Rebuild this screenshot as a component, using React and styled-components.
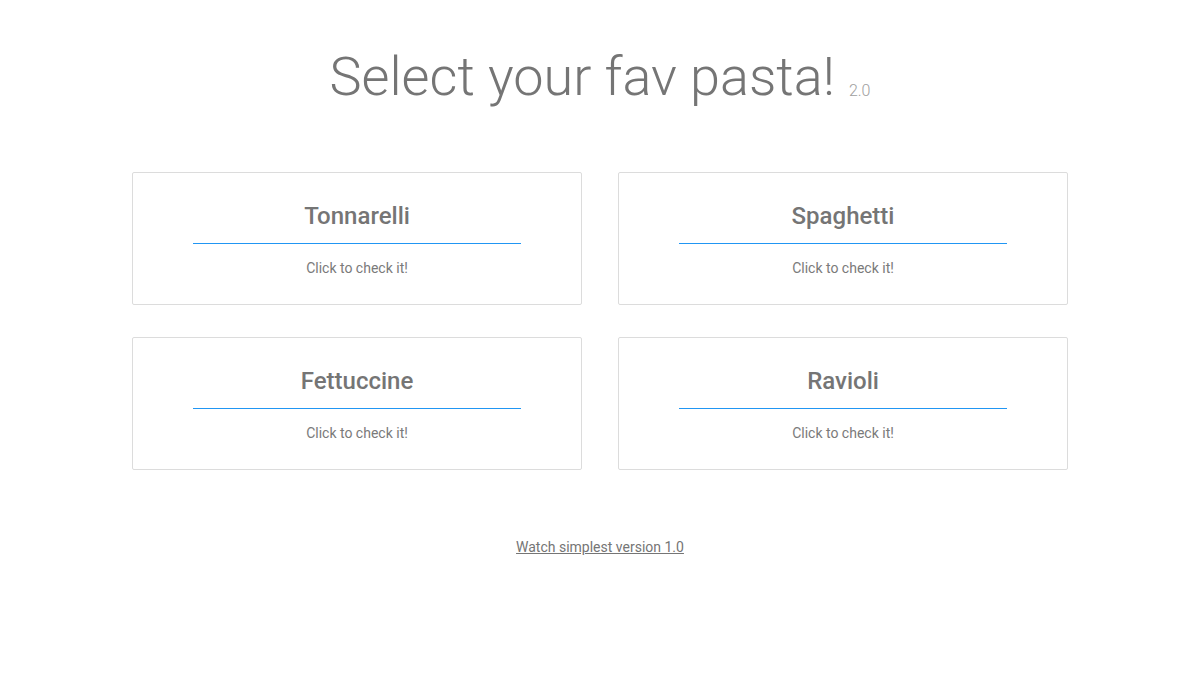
import React from 'react';
import styled, { createGlobalStyle } from 'styled-components';

const pastas = ['Tonnarelli', 'Spaghetti', 'Fettuccine', 'Ravioli'];

function App() {
    return (
        <Page>
            <GlobalStyle />
            <Title>
                Select your fav pasta!
                <Version>2.0</Version>
            </Title>
            <Grid>
                {pastas.map((name) => (
                    <Card key={name}>
                        <CardTitle>{name}</CardTitle>
                        <CardText>Click to check it!</CardText>
                    </Card>
                ))}
            </Grid>
            <Footer>
                <OldLink href="#">Watch simplest version 1.0</OldLink>
            </Footer>
        </Page>
    );
}

const GlobalStyle = createGlobalStyle`
    html, body {
        margin: 0;
        padding: 0;
        background: #fff;
        font-family: Roboto, "Liberation Sans", sans-serif;
        color: #757575;
    }
`;
const Page = styled.div`
    width: 936px;
    margin: 0 auto;
    padding-top: 40px;
`;
const Title = styled.h1`
    margin: 0;
    text-align: center;
    font-size: 54px;
    font-weight: 300;
    line-height: 74px;
    color: #757575;
`;
const Version = styled.span`
    font-size: 16px;
    margin-left: 14px;
    color: #9e9e9e;
    vertical-align: -1px;
`;
const Grid = styled.div`
    display: grid;
    grid-template-columns: 1fr 1fr;
    column-gap: 36px;
    row-gap: 32px;
    margin-top: 44px;
`;
const Card = styled.div`
    height: 133px;
    box-sizing: border-box;
    border: 1px solid #dcdcdc;
    border-radius: 2px;
    padding: 27px 60px 0;
    text-align: center;
    cursor: pointer;
`;
const CardTitle = styled.h2`
    margin: 0;
    padding-bottom: 11px;
    font-size: 24px;
    font-weight: 500;
    line-height: 32px;
    color: #757575;
    border-bottom: 1px solid #2196f3;
`;
const CardText = styled.p`
    margin: 14px 0 0;
    font-size: 14px;
    line-height: 20px;
    color: #7a7a7a;
`;
const Footer = styled.div`
    text-align: center;
    margin-top: 67px;
`;
const OldLink = styled.a`
    font-size: 14px;
    color: #757575;
    text-decoration: underline;
`;

export default App;
